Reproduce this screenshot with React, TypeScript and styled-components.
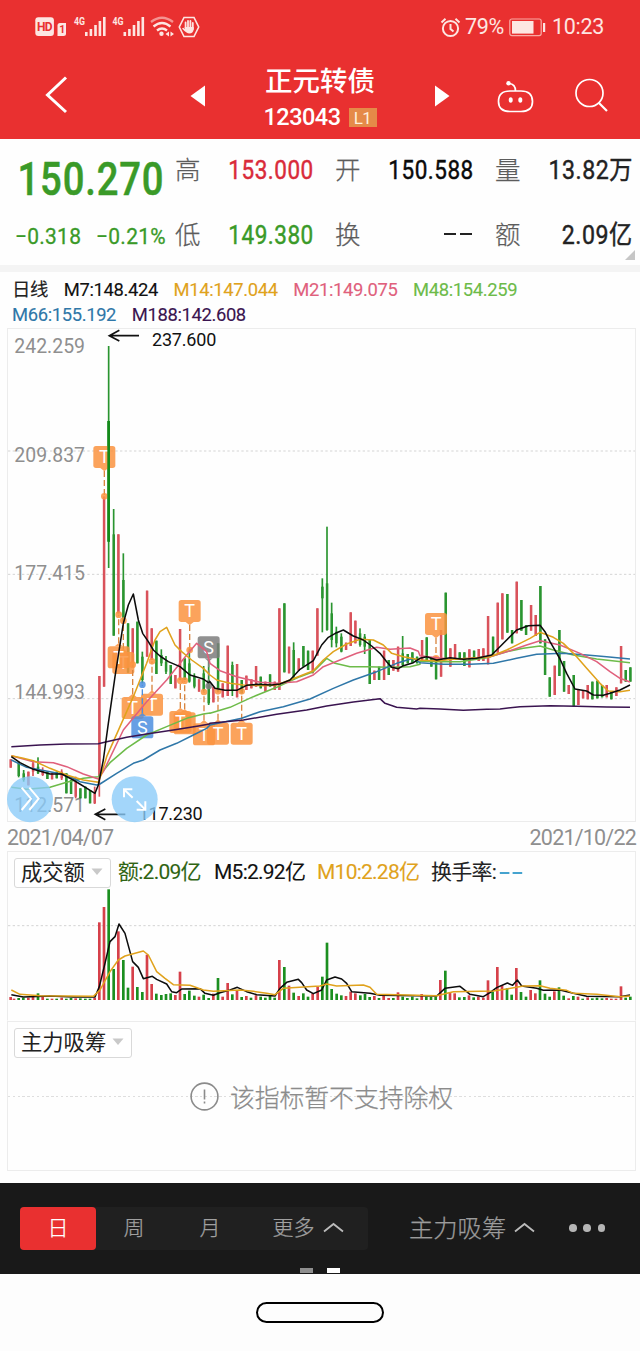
import React from "react";
import styled, { createGlobalStyle } from "styled-components";

const Global = createGlobalStyle`
  * { box-sizing: border-box; }
  body { margin: 0; background: #fff; }
  body, button { font-family: Roboto, "Noto Sans CJK SC", sans-serif; }
  svg { display: block; flex: none; overflow: visible; }
  svg text { font-family: Roboto, "Noto Sans CJK SC", sans-serif; }
`;

const RED = "#e93030";
const UP = "#d6404a";
const DOWN = "#1b8f20";

const Page = styled.main`
  width: 640px;
  height: 1351px;
  display: flex;
  flex-direction: column;
  overflow: hidden;
  background: #fefefe;
`;

/* ---------- top bars ---------- */

const StatusBar = styled.div`
  height: 54px;
  flex: none;
  background: ${RED};
  color: #fde6e2;
  display: flex;
  justify-content: space-between;
  align-items: center;
  padding: 0 36px 0 35px;
`;

const StatusRight = styled.div`
  display: flex;
  align-items: center;
  font-size: 21.5px;
  letter-spacing: -0.3px;
  line-height: 56px;
  gap: 5px;
`;

const Clock = styled.span`
  margin-left: 1px;
`;

const Header = styled.header`
  height: 85px;
  flex: none;
  background: ${RED};
  color: #fff;
  display: grid;
  grid-template-columns: 186px 268px 94px 92px;
`;

const HeaderCell = styled.div<{ $left: number; $top: number }>`
  padding: ${(p) => p.$top}px 0 0 ${(p) => p.$left}px;
`;

const TitleCell = styled.div`
  display: flex;
  justify-content: space-between;
  padding: 0 3px 0 3px;
`;

const Arrow = styled.div`
  padding-top: 31px;
`;

const TitleBlock = styled.div`
  display: flex;
  flex-direction: column;
  align-items: center;
`;

const Title = styled.h1`
  margin: 10px 0 0;
  font-size: 27.5px;
  font-weight: 500;
  line-height: 36px;
`;

const Code = styled.div`
  display: flex;
  align-items: center;
  gap: 8px;
  font-size: 23.5px;
  font-weight: 500;
  letter-spacing: -0.5px;
  line-height: 34px;
`;

const Level = styled.span`
  width: 28px;
  height: 19px;
  background: #e58a48;
  color: #fff0dc;
  font-size: 17px;
  font-weight: 400;
  line-height: 20px;
  text-align: center;
`;

/* ---------- quote ---------- */

const Quote = styled.section`
  height: 126px;
  flex: none;
  display: grid;
  grid-template-columns: 138px 138px 138px 137px;
  grid-template-rows: 64px 62px;
  column-gap: 22px;
  padding-left: 15px;
  position: relative;
`;

const Price = styled.div`
  padding-left: 3px;
  font-size: 45.5px;
  font-weight: 500;
  letter-spacing: 1px;
  line-height: 81px;
  color: #3a9a28;
  -webkit-text-stroke: 0.5px #3a9a28;
  white-space: nowrap;
  transform: scaleX(0.84);
  transform-origin: 0 50%;
`;

const Change = styled.div`
  display: flex;
  gap: 16px;
  font-size: 22.5px;
  letter-spacing: 0.3px;
  line-height: 66px;
  color: #3a9a28;
  white-space: nowrap;
  -webkit-text-stroke: 0.3px #3a9a28;
  transform: scaleX(0.93);
  transform-origin: 0 50%;
`;

const Cell = styled.div<{ $line: number }>`
  display: flex;
  justify-content: space-between;
  align-items: flex-start;
  line-height: ${(p) => p.$line}px;
  white-space: nowrap;
`;

const Label = styled.span`
  font-size: 25.5px;
  font-weight: 300;
  color: #5c5c5c;
  -webkit-text-stroke: 0.25px #5c5c5c;
`;

const Value = styled.span<{ $color: string; $scale: number }>`
  font-size: 26px;
  letter-spacing: 0.6px;
  margin-right: -0.6px;
  color: ${(p) => p.$color};
  -webkit-text-stroke: 0.45px ${(p) => p.$color};
  transform: scaleX(${(p) => p.$scale});
  transform-origin: 100% 50%;
`;

const DashSlot = styled.span`
  padding-top: 29px;
`;

const Corner = styled.i`
  position: absolute;
  right: 5px;
  bottom: 5px;
  border-left: 10px solid transparent;
  border-bottom: 10px solid #c6c6c6;
`;

const Divider = styled.div`
  height: 7px;
  flex: none;
  background: #f4f4f4;
`;

/* ---------- chart panels ---------- */

const Legend = styled.div`
  height: 56px;
  flex: none;
  padding: 6px 12px 0;
`;

const LegendRow = styled.div`
  display: flex;
  gap: 15.7px;
  height: 24.5px;
  line-height: 24.5px;
  align-items: center;
  white-space: nowrap;
`;

const LegendItem = styled.span<{ $color: string }>`
  font-size: 18.4px;
  letter-spacing: -0.36px;
  color: ${(p) => p.$color};
  -webkit-text-stroke: 0.12px ${(p) => p.$color};
`;

const Panel = styled.section<{ $height: number; $open?: boolean }>`
  height: ${(p) => p.$height}px;
  flex: none;
  margin: 0 4px 0 7px;
  border: 1px solid #ececec;
  border-bottom-color: ${(p) => (p.$open ? "transparent" : "#ececec")};
`;

const Dates = styled.div`
  height: 29px;
  flex: none;
  display: flex;
  justify-content: space-between;
  padding: 0 4px 0 7px;
  font-size: 21.5px;
  line-height: 31px;
  letter-spacing: -0.8px;
  color: #8f8f8f;
`;

const IndicatorBar = styled.div`
  height: 35px;
  display: flex;
  align-items: center;
  padding: 6px 0 0 6px;
  white-space: nowrap;
`;

const Select = styled.button<{ $width: number }>`
  width: ${(p) => p.$width}px;
  height: 30px;
  padding: 1.5px 0 0 6px;
  margin: 0 7px 0 0;
  flex: none;
  display: flex;
  align-items: center;
  gap: 6px;
  background: #fff;
  border: 1.5px solid #d9d9d9;
  border-radius: 3px;
  color: #222;
  font-size: 21.3px;
  line-height: 30px;
`;

const Metric = styled.span<{ $color: string; $width: number }>`
  width: ${(p) => p.$width}px;
  height: 30px;
  line-height: 31px;
  flex: none;
  display: flex;
  align-items: center;
  gap: 3px;
  font-size: 21px;
  letter-spacing: -0.75px;
  color: ${(p) => p.$color};
  -webkit-text-stroke: 0.1px ${(p) => p.$color};
`;

const Notice = styled.div`
  height: 74px;
  margin-top: 2px;
  display: flex;
  align-items: center;
  justify-content: center;
  gap: 11px;
  background: repeating-linear-gradient(90deg, #dedede 0 2.4px, transparent 2.4px 4.8px) 0 37px / 100% 1px no-repeat;
`;

const NoticeText = styled.span`
  padding-top: 6px;
  font-size: 24.8px;
  line-height: 68px;
  font-weight: 300;
  color: #8b8b8b;
  -webkit-text-stroke: 0.25px #8b8b8b;
`;

/* ---------- bottom bars ---------- */

const Toolbar = styled.nav`
  height: 91px;
  flex: none;
  margin-top: 12px;
  background: #191919;
  color: #9b9b9b;
  display: flex;
  flex-wrap: wrap;
  padding: 23.5px 0 0 20px;
`;

const Periods = styled.div`
  width: 348px;
  height: 43px;
  display: flex;
  background: #202020;
  border-radius: 4px;
`;

const Period = styled.button<{ $active?: boolean; $width: number }>`
  width: ${(p) => p.$width}px;
  height: 43px;
  padding: 0;
  border: 0;
  border-radius: 4px;
  display: flex;
  align-items: center;
  justify-content: center;
  gap: 8px;
  font-size: 21px;
  font-weight: 300;
  line-height: 45px;
  -webkit-text-stroke: 0.25px currentColor;
  background: ${(p) => (p.$active ? RED : "transparent")};
  color: ${(p) => (p.$active ? "#fff" : "#a0a0a0")};
`;

const Indicator = styled.div`
  height: 43px;
  margin-left: 41px;
  display: flex;
  align-items: center;
  gap: 8px;
  font-size: 24.3px;
  font-weight: 300;
  line-height: 45px;
  -webkit-text-stroke: 0.25px currentColor;
`;

const Dots = styled.div`
  height: 43px;
  margin-left: 34px;
  display: flex;
  align-items: center;
  gap: 6.6px;
  i {
    width: 7.6px;
    height: 7.6px;
    border-radius: 50%;
    background: #b5b5b5;
  }
`;

const Pager = styled.div`
  width: 620px;
  display: flex;
  gap: 14px;
  padding: 17px 0 0 280px;
`;

const PagerMark = styled.i<{ $on?: boolean }>`
  width: 13px;
  height: 5.5px;
  background: ${(p) => (p.$on ? "#fff" : "#8f8f8f")};
`;

const SystemBar = styled.div`
  flex: 1;
  display: flex;
  justify-content: center;
  padding-top: 28px;
  background: #fdfdfd;
`;

const HomePill = styled.div`
  width: 128px;
  height: 21px;
  border: 2px solid #000;
  border-radius: 11px;
`;

/* ---------- chart data, in thirds of a pixel ---------- */

type Bar = [string, number, number, number, number?, number?];

type Segment = { x: number; y: number; bars: Bar[] };

const candles: Segment[] = [
  {
    x: 0,
    y: 1740,
    bars: [
      ["r", 32, 538, 563], ["g", 56, 545, 592, 548, 588], ["g", 71, 570, 605, 580, 600], ["r", 85, 575, 616], ["r", 99, 542, 588, 550, 575],
      ["g", 114, 532, 582, 560, 580], ["r", 128, 562, 588, 570, 585], ["g", 142, 575, 597], ["r", 156, 578, 598], ["g", 170, 575, 595],
      ["r", 185, 568, 600, 575, 595], ["g", 199, 580, 640], ["g", 213, 600, 642], ["r", 227, 590, 655, 605, 650], ["g", 241, 625, 655],
      ["g", 256, 620, 655], ["g", 270, 630, 670], ["r", 284, 620, 672, 640, 670], ["r", 298, 288, 650, 288, 590], ["r", 312, -250, 320],
      ["g", 326, -702, -36, -477, -115], ["g", 341, -213, 167, -137, 167], ["r", 355, -137, 100], ["g", 370, -80, 125, 0, 125],
      ["g", 384, 130, 278], ["r", 398, 145, 250], ["g", 412, 125, 250], ["g", 427, 215, 310, 230, 300], ["r", 441, 32, 230], ["r", 455, 145, 240],
      ["g", 469, 182, 282], ["g", 484, 208, 258, 225, 250], ["g", 498, 228, 282, 245, 275], ["g", 512, 255, 312], ["r", 526, 285, 325],
      ["r", 540, 147, 300], ["g", 554, 235, 300], ["g", 568, 205, 308, 250, 305], ["g", 583, 280, 325, 290, 320], ["r", 597, 298, 335],
      ["g", 611, 258, 335, 280, 330], ["g", 626, 240, 375, 300, 370],
    ],
  },
  {
    x: 630,
    y: 1530,
    bars: [
      ["r", 10, 530, 577], ["g", 24, 400, 545], ["r", 38, 520, 562], ["r", 53, 407, 558], ["g", 67, 455, 558, 465, 540], ["r", 81, 462, 562],
      ["g", 95, 510, 550], ["r", 109, 497, 540], ["r", 124, 508, 535], ["r", 138, 468, 530], ["g", 152, 500, 535], ["r", 166, 515, 545],
      ["g", 180, 493, 530], ["r", 194, 515, 540], ["r", 208, 295, 540], ["g", 223, 280, 487], ["r", 237, 410, 490], ["g", 251, 397, 510, 420, 500],
      ["r", 266, 445, 482], ["g", 280, 408, 470], ["g", 294, 422, 480], ["r", 308, 422, 490], ["r", 322, 295, 437], ["g", 337, 205, 367, 230, 265],
      ["g", 351, 50, 362, 220, 360], ["g", 365, 278, 412, 310, 390], ["g", 379, 350, 412, 365, 400], ["g", 394, 370, 427, 380, 425],
      ["r", 408, 398, 420], ["r", 422, 307, 408], ["r", 436, 332, 400], ["g", 450, 355, 410, 370, 405], ["g", 464, 372, 432, 380, 410],
      ["g", 479, 390, 522], ["r", 493, 482, 510], ["g", 507, 470, 510], ["r", 522, 422, 510], ["g", 536, 450, 495], ["r", 550, 450, 482],
      ["r", 564, 410, 485], ["g", 578, 378, 470, 430, 465], ["g", 593, 432, 460], ["g", 607, 427, 458], ["g", 621, 440, 460],
      ["r", 636, 390, 455], ["g", 650, 382, 450],
    ],
  },
  {
    x: 1260,
    y: 1680,
    bars: [
      ["g", 34, 292, 320], ["g", 48, 298, 358], ["r", 63, 210, 350], ["g", 77, 98, 300], ["r", 91, 265, 320], ["r", 105, 252, 298],
      ["g", 119, 277, 300], ["g", 133, 277, 318], ["r", 148, 268, 322], ["g", 162, 272, 300], ["r", 176, 267, 303], ["r", 190, 265, 303],
      ["r", 204, 168, 313], ["g", 219, 230, 285], ["r", 233, 128, 278], ["r", 247, 100, 238], ["g", 262, 102, 218], ["g", 276, 210, 250],
      ["r", 290, 65, 220], ["g", 304, 120, 212], ["g", 318, 195, 225], ["r", 333, 135, 212], ["r", 347, 165, 228], ["g", 361, 78, 250],
      ["g", 375, 238, 345], ["g", 389, 352, 410], ["r", 404, 317, 405], ["g", 418, 210, 348], ["g", 432, 303, 395], ["r", 446, 375, 402],
      ["g", 461, 345, 440], ["r", 475, 390, 435], ["r", 489, 392, 415], ["r", 503, 375, 418], ["g", 517, 365, 418], ["g", 532, 362, 415],
      ["g", 546, 375, 412], ["r", 560, 375, 412], ["g", 574, 395, 418], ["r", 589, 382, 408], ["r", 603, 258, 370], ["g", 617, 330, 365],
      ["g", 631, 322, 365],
    ],
  },
];

type Line = { color: string; parts: [string, string, string] };

const averages: Line[] = [
  {
    color: "#6dbb49",
    parts: [
      "34,622 80,628 150,622 200,607 250,595 295,590 330,548 380,505 440,465 500,440 560,415 610,402 630,399",
      "0,610 60,592 130,560 200,532 270,500 310,485 350,445 375,460 420,470 470,470 540,472 600,470 630,463",
      "0,303 60,305 120,305 200,293 260,275 310,265 360,258 400,270 460,285 530,297 630,308",
    ],
  },
  {
    color: "#2f77a8",
    parts: [
      "34,540 80,562 150,575 200,585 240,605 290,615 300,612 350,580 400,550 430,540 480,510 530,490 580,465 620,445",
      "0,645 95,625 150,605 220,590 300,567 370,535 430,510 500,485 560,460 610,445",
      "0,308 70,313 150,313 220,310 290,295 350,283 430,280 500,285 560,290 630,297",
    ],
  },
  {
    color: "#e0607c",
    parts: [
      "34,527 100,545 160,548 200,560 250,582 295,597 310,575 370,450 440,365 500,300 560,225 590,190 620,215",
      "0,460 30,482 80,500 150,517 200,520 260,515 310,495 340,470 390,450 440,430 500,412 540,418 600,414 625,424",
      "0,287 50,293 100,298 150,295 210,290 270,272 320,255 360,242 420,255 480,280 530,305 570,335 600,355 630,366",
    ],
  },
  {
    color: "#e0a21c",
    parts: [
      "34,527 70,535 100,542 150,565 200,585 250,600 295,607 305,580 320,530 360,440 400,350 440,250 465,180 480,155 500,142 525,195 545,215 575,240 610,265",
      "0,495 20,510 60,520 100,525 160,527 200,525 240,510 310,482 340,450 370,425 410,402 450,388 490,390 520,405 545,430 580,440 620,448",
      "0,300 50,303 100,298 150,295 210,290 260,270 300,250 330,235 360,217 400,232 430,250 470,290 500,325 540,370 565,393 600,395 630,391",
    ],
  },
  {
    color: "#3a1450",
    parts: [
      "34,500 120,495 200,492 295,491 320,485 380,472 440,462 520,450 600,437 628,432",
      "0,640 100,630 200,613 290,600 350,588 430,576 510,566 525,580 560,592 620,597",
      "0,445 60,447 130,451 200,448 240,447 300,440 390,437 470,439 560,441 630,442",
    ],
  },
  {
    color: "#0c0c0c",
    parts: [
      "34,530 60,548 100,568 150,582 185,582 220,600 285,640 295,615 310,540 325,430 345,290 370,130 385,75 400,42 415,120 428,160 445,185 460,210 480,228 505,245 540,260 570,285 610,297 625,308",
      "0,515 15,535 45,541 80,541 110,526 140,523 185,525 210,522 240,510 270,478 310,452 335,405 355,382 380,368 400,360 430,378 460,390 485,408 510,430 530,455 545,472 565,476 580,467 610,458 625,448",
      "0,295 20,290 50,300 90,293 130,298 170,295 215,285 245,255 275,225 290,210 325,197 360,196 375,215 390,245 420,297 440,340 465,387 500,393 520,405 550,406 575,398 600,390 630,375",
    ],
  },
];

const offsets = [
  [0, 1740],
  [630, 1530],
  [1260, 1680],
];

const joinParts = (parts: string[]) =>
  parts
    .flatMap((part, i) =>
      part.split(" ").map((pair) => {
        const [x, y] = pair.split(",").map(Number);
        return `${x + offsets[i][0]},${y + offsets[i][1]}`;
      })
    )
    .join(" ");

type Mark = { x: number; y: number; kind: "T" | "S"; color: string; to: number };

const ORANGE = "#fb9440";

const marks: Mark[] = [
  { x: 313, y: 1371, kind: "T", color: ORANGE, to: 1489 },
  { x: 370, y: 1989, kind: "T", color: ORANGE, to: 1862 },
  { x: 356, y: 1972, kind: "T", color: ORANGE, to: 1844 },
  { x: 569, y: 1833, kind: "T", color: ORANGE, to: 1950 },
  { x: 626, y: 1942, kind: "S", color: "#7d7d7d", to: 2058 },
  { x: 398, y: 2124, kind: "T", color: ORANGE, to: 1994 },
  { x: 456, y: 2114, kind: "T", color: ORANGE, to: 1984 },
  { x: 427, y: 2182, kind: "S", color: "#4d8fe0", to: 2054 },
  { x: 554, y: 2170, kind: "T", color: ORANGE, to: 2042 },
  { x: 541, y: 2166, kind: "T", color: ORANGE, to: 2042 },
  { x: 612, y: 2203, kind: "T", color: ORANGE, to: 2076 },
  { x: 654, y: 2201, kind: "T", color: ORANGE, to: 2074 },
  { x: 725, y: 2201, kind: "T", color: ORANGE, to: 2074 },
  { x: 1308, y: 1872, kind: "T", color: ORANGE, to: 1975 },
];

const Marker = ({ x, y, kind, color, to }: Mark) => {
  const s = to > y ? 1 : -1;
  return (
    <g>
      <path d={`M${x} ${y + s * 42}V${to}`} stroke={kind === "T" ? "#d9853f" : color} strokeWidth={4} strokeDasharray="18 9" />
      <circle cx={x} cy={to} r={10} fill={color} opacity={0.85} />
      <g opacity={0.85} fill={color}>
        <rect x={x - 33} y={y - 33} width={66} height={66} rx={8} />
        <path d={`M${x - 12} ${y + s * 33}H${x + 12}L${x} ${y + s * 43}Z`} />
      </g>
      <text x={x} y={y + 19} fontSize={54} fontWeight={400} fill="#fff" textAnchor="middle">
        {kind}
      </text>
    </g>
  );
};

const axis: [string, number][] = [
  ["242.259", 1060],
  ["209.837", 1385],
  ["177.415", 1741],
  ["144.993", 2096],
  ["112.571", 2435],
];

const PriceChart = () => (
  <svg width="627" height="492" viewBox="24 987 1881 1476">
    {[1353, 1723, 2096].map((y) => (
      <path key={y} d={`M24 ${y}H1905`} stroke="#d4d4d4" strokeWidth={3} strokeDasharray="7 7" />
    ))}
    {axis.map(([label, y]) => (
      <text key={label} x={43} y={y} fontSize={62} fill="#8f8f8f" textLength={212} lengthAdjust="spacingAndGlyphs">
        {label}
      </text>
    ))}
    <g opacity={0.9}>
      {candles.map((seg) =>
        seg.bars.map(([c, x, top, bottom, bodyTop = top, bodyBottom = bottom]) => (
          <g key={seg.x + x} fill={c === "r" ? UP : "#148a1a"}>
            <rect x={seg.x + x - 2.5} y={seg.y + top} width={5} height={bottom - top} />
            <rect x={seg.x + x - 3.5} y={seg.y + bodyTop} width={7.5} height={bodyBottom - bodyTop} />
          </g>
        ))
      )}
    </g>
    {marks.map((m) => (
      <Marker key={`${m.x}-${m.y}`} {...m} />
    ))}
    <path d="M326 1263V1625" stroke="#148a1a" strokeWidth={8} />
    {averages.map((a) => (
      <polyline key={a.color} points={joinParts(a.parts)} fill="none" stroke={a.color} strokeWidth={4.6} strokeLinejoin="round" />
    ))}
    <g fill="none" stroke="#111" strokeWidth={5}>
      <path d="M417 1007H329M358 991L328 1007L358 1023" />
      <path d="M376 2443H287M316 2427L286 2443L316 2459" />
    </g>
    <g fontSize={54} fill="#111">
      <text x={456} y={1038} textLength={193}>237.600</text>
      <text x={416} y={2460} textLength={192}>117.230</text>
    </g>
    <g fill="#8accfa" opacity={0.78}>
      <circle cx={90} cy={2398} r={69} />
      <circle cx={404} cy={2398} r={69} />
    </g>
    <g fill="none" stroke="#fff" strokeWidth={6}>
      <path d="M65 2363L93 2396L65 2430M88 2363L116 2396L88 2430" />
      <path d="M372 2392V2368H397M373 2369L398 2393M436 2404V2429H410M435 2428L410 2403" />
    </g>
  </svg>
);

const volumes: [number, string][] = [
  [0, "r32:441 r42:446 g56:444 g70:443 r85:443 r99:438 g114:430 r128:440 g142:446 r156:446 g170:446 r185:443 g199:446 g213:444 r227:445 g241:445 g256:446 g270:446 r284:443 r298:217 r312:171 g326:118 g341:357 r355:244 g370:330 g384:413 r398:350 g412:411 g427:426 r441:314 r455:402 g469:431 g484:435 g498:432 g512:430 r526:435 r540:365 g554:432 g568:422 g583:437 r597:440 g611:434 g626:444 r640:431 g654:384 r668:440 r683:399 g697:433 r711:422 g725:441 r739:438 g753:443 r768:436 g782:440 g796:443 g810:436 g824:443 r838:330 g853:351 r867:407 g881:428 r896:438 g910:430 g924:440 r938:430 r953:410"],
  [960, "g7:380 g21:278 g35:417 g50:431 g64:436 r78:438 r92:425 r106:430 g121:436 g135:432 g149:441 r163:438 g177:444 r191:432 r206:444 g220:444 r234:427 g248:440 g262:444 g277:440 g291:445 r305:432 g319:440 g333:441 g347:440 r361:390 g376:362 r390:428 r404:430 g418:442 g433:441 r447:436 g461:442 r475:440 r490:443 r504:391 g518:425 r532:351 r546:405 g561:415 g575:434 r589:354 g603:426 g618:440 r632:420 r646:430 g660:391 g675:431 g689:440 r703:424 g717:412 g731:437 r746:445 g760:438 r774:440 g788:446 r803:442 g817:445 g831:443 g846:445 r860:444 r874:446 r888:446 r903:409 g917:443 g931:440"],
];

const VolumeChart = () => (
  <svg width="627" height="116" viewBox="24 111 1881 348">
    <path d="M24 227H1905" stroke="#d4d4d4" strokeWidth={3} strokeDasharray="7 7" />
    {volumes.map(([dx, list]) =>
      list.split(" ").map((item) => {
        const [x, top] = item.slice(1).split(":").map(Number);
        return <rect key={dx + x} x={dx + x - 4} y={top} width={8} height={450 - top} fill={item[0] === "r" ? UP : DOWN} />;
      })
    )}
    <g fill="none" strokeWidth={4.6} strokeLinejoin="round">
      <polyline
        stroke="#0c0c0c"
        points="34,434 70,441 150,438 220,441 285,441 298,410 315,340 330,275 345,260 357,222 375,250 398,335 415,352 430,386 457,379 470,388 500,402 515,425 530,428 545,417 600,416 615,430 640,436 660,428 690,420 712,412 740,425 770,434 825,438 840,415 860,397 895,388 905,398 920,420 940,431 965,420 980,390 1005,381 1025,387 1040,400 1055,425 1110,430 1140,436 1310,438 1335,415 1380,409 1400,425 1410,433 1450,440 1470,428 1490,413 1522,399 1538,406 1552,390 1565,408 1610,415 1630,421 1680,420 1720,430 1760,439 1860,440 1890,435"
      />
      <polyline
        stroke="#e0a21c"
        points="34,420 60,433 120,437 280,439 300,420 330,365 355,330 375,318 430,303 445,315 470,365 495,385 520,404 570,406 610,420 640,424 720,420 760,424 800,430 825,434 850,415 960,408 980,402 1010,408 1090,405 1110,412 1130,433 1310,437 1360,425 1480,423 1520,417 1570,408 1620,407 1650,415 1700,421 1720,430 1790,433 1860,440 1890,438"
      />
    </g>
  </svg>
);

/* ---------- icons ---------- */

const Signal = ({ x }: { x: number }) => (
  <g transform={`translate(${x} 0)`} fill="#fde6e2">
    <text x={0} y={9.3} fontSize={11.5} fontWeight={700} textLength={11} lengthAdjust="spacingAndGlyphs">4G</text>
    <rect x={11} y={16} width={2.6} height={4} />
    <rect x={15.6} y={13} width={2.6} height={7} />
    <rect x={20.2} y={9} width={2.6} height={11} />
    <rect x={24.6} y={5} width={2.6} height={15} />
    <rect x={29} y={1} width={2.6} height={19} />
  </g>
);

const StatusIcons = () => (
  <svg width="166" height="22" viewBox="0 0 166 22">
    <rect x={0.3} y={1.3} width={18.6} height={18.6} rx={3} fill="#fde6e2" />
    <text x={2} y={14.8} fontSize={12} fontWeight={700} fill={RED} textLength={15.5}>HD</text>
    <path d="M22.5 9.5Q22.5 7 25 7H31V17.5Q31 20 28.5 20H22.5Z" fill="#fde6e2" />
    <text x={24.3} y={17.4} fontSize={10.5} fontWeight={700} fill={RED}>1</text>
    <Signal x={39} />
    <Signal x={77.5} />
    <g fill="none" stroke="#fde6e2" strokeWidth={2.3}>
      <path d="M116 6Q127 -2.5 138 6" opacity={0.55} />
      <path d="M118.5 10.5Q127 3.5 135.5 10.5M122 14.5Q127 10.5 132 14.5" />
    </g>
    <circle cx={126.5} cy={17.7} r={2.2} fill="#fde6e2" />
    <path d="M130.5 18L134 15.5V20.5ZM139 18L135.5 15.5V20.5Z" fill="#fde6e2" />
    <path d="M149 1.5H159L163.7 11L159 20.5H149L144.3 11Z" fill="none" stroke="#fde6e2" strokeWidth={1.6} />
    <path d="M150.6 6.5V12M153 4.8V12M155.4 5V12M157.8 7V13" stroke="#fde6e2" strokeWidth={1.8} strokeLinecap="round" />
    <path d="M149.6 11H158.7V13.5Q158 17.5 154.5 17.5Q151.5 17.5 147 12.5L148.2 11.7L150 13Z" fill="#fde6e2" />
  </svg>
);

const AlarmIcon = () => (
  <svg width="20" height="21" viewBox="0 0 20 21" fill="none" stroke="#fde6e2" strokeWidth={2}>
    <circle cx={10.5} cy={11.5} r={7.6} />
    <path d="M10.5 7V12L13.5 14.5M1.5 5.5L5.5 1.8M19.5 5.5L15.5 1.8" />
  </svg>
);

const BatteryIcon = () => (
  <svg width="37" height="19" viewBox="0 0 37 19">
    <rect x={0.8} y={1} width={31.4} height={16.6} rx={2} fill="none" stroke="#f9aaa4" strokeWidth={1.2} />
    <rect x={3} y={3} width={21.5} height={12.6} fill="#fde6e2" />
    <rect x={34} y={5} width={2.2} height={9} fill="#fde6e2" />
  </svg>
);

const Caret = () => (
  <svg width="12" height="10" viewBox="0 0 12 10">
    <path d="M0.5 0.5H11.5L6 7Z" fill="#c9c9c9" />
  </svg>
);

const ChevronUp = () => (
  <svg width="21" height="12" viewBox="0 0 21 12" fill="none" stroke="#bcbcbc" strokeWidth={1.8}>
    <path d="M1 9.5L10.5 2L20 9.5" />
  </svg>
);

const DashPair = ({ color, width }: { color: string; width: number }) => (
  <svg width={width} height="4" viewBox="0 0 30 4" preserveAspectRatio="none">
    <path d="M1 2H13M17 2H29" stroke={color} strokeWidth={2.2} />
  </svg>
);

const quoteTop: [string, string, string][] = [
  ["高", "153.000", "#d92b3a"],
  ["开", "150.588", "#0a0a0a"],
  ["量", "13.82万", "#222"],
];

const quoteBottom: [string, string, string][] = [
  ["低", "149.380", "#3a9a28"],
  ["换", "", "#222"],
  ["额", "2.09亿", "#222"],
];

const QuoteCell = ({ label, value, color, line }: { label: string; value: string; color: string; line: number }) => (
  <Cell $line={line}>
    <Label>{label}</Label>
    {value ? (
      <Value $color={color} $scale={/\d$/.test(value) ? 0.865 : 0.89}>
        {value}
      </Value>
    ) : (
      <DashSlot>
        <DashPair color={color} width={30} />
      </DashSlot>
    )}
  </Cell>
);

export default function App() {
  return (
    <Page>
      <Global />
      <StatusBar>
        <StatusIcons />
        <StatusRight>
          <AlarmIcon />
          <span>79%</span>
          <BatteryIcon />
          <Clock>10:23</Clock>
        </StatusRight>
      </StatusBar>
      <Header>
        <HeaderCell $left={45} $top={21}>
          <svg width="24" height="40" viewBox="0 0 24 40" fill="none" stroke="#fff" strokeWidth={3}>
            <path d="M21 2.5L2.5 20L21 37" />
          </svg>
        </HeaderCell>
        <TitleCell>
          <Arrow>
            <svg width="16" height="22" viewBox="0 0 16 22">
              <path d="M16 0.5V21.5L1.5 11Z" fill="#fff" />
            </svg>
          </Arrow>
          <TitleBlock>
            <Title>正元转债</Title>
            <Code>
              123043<Level>L1</Level>
            </Code>
          </TitleBlock>
          <Arrow>
            <svg width="16" height="22" viewBox="0 0 16 22">
              <path d="M0 0.5V21.5L14.5 11Z" fill="#fff" />
            </svg>
          </Arrow>
        </TitleCell>
        <HeaderCell $left={43} $top={26}>
          <svg width="38" height="34" viewBox="0 0 38 34" fill="none" stroke="#fff" strokeWidth={1.7}>
            <path d="M12 3.5Q18.5 4 18.5 11M13 11H24Q35.5 11 35.5 21.5Q35.5 31.5 24 31.5H13Q1.5 31.5 1.5 21.5Q1.5 11 13 11Z" />
            <circle cx={11.5} cy={3.2} r={2.2} fill="#fff" stroke="none" />
            <ellipse cx={13.7} cy={20} rx={2} ry={2.8} fill="#fff" stroke="none" />
            <ellipse cx={23.3} cy={20} rx={2} ry={2.8} fill="#fff" stroke="none" />
          </svg>
        </HeaderCell>
        <HeaderCell $left={27} $top={24}>
          <svg width="34" height="34" viewBox="0 0 34 34" fill="none" stroke="#fff" strokeWidth={1.7}>
            <circle cx={14.5} cy={15} r={13.5} />
            <path d="M23.5 24.5L32 33" strokeWidth={2.2} />
          </svg>
        </HeaderCell>
      </Header>
      <Quote>
        <Price>150.270</Price>
        {quoteTop.map(([label, value, color]) => (
          <QuoteCell key={label} label={label} value={value} color={color} line={62} />
        ))}
        <Change>
          <span>−0.318</span>
          <span>−0.21%</span>
        </Change>
        {quoteBottom.map(([label, value, color]) => (
          <QuoteCell key={label} label={label} value={value} color={color} line={64} />
        ))}
        <Corner />
      </Quote>
      <Divider />
      <Legend>
        <LegendRow>
          <LegendItem $color="#222">日线</LegendItem>
          <LegendItem $color="#111">M7:148.424</LegendItem>
          <LegendItem $color="#e0a21c">M14:147.044</LegendItem>
          <LegendItem $color="#e0607c">M21:149.075</LegendItem>
          <LegendItem $color="#6dbb49">M48:154.259</LegendItem>
        </LegendRow>
        <LegendRow>
          <LegendItem $color="#2f77a8">M66:155.192</LegendItem>
          <LegendItem $color="#3a1450">M188:142.608</LegendItem>
        </LegendRow>
      </Legend>
      <Panel $height={494}>
        <PriceChart />
      </Panel>
      <Dates>
        <span>2021/04/07</span>
        <span>2021/10/22</span>
      </Dates>
      <Panel $height={170} $open>
        <IndicatorBar>
          <Select $width={97}>
            成交额
            <Caret />
          </Select>
          <Metric $color="#2f6412" $width={96}>额:2.09亿</Metric>
          <Metric $color="#111" $width={103}>M5:2.92亿</Metric>
          <Metric $color="#e0a21c" $width={114}>M10:2.28亿</Metric>
          <Metric $color="#222" $width={100}>
            换手率:
            <DashPair color="#45a3cf" width={24} />
          </Metric>
        </IndicatorBar>
        <VolumeChart />
      </Panel>
      <Panel $height={150}>
        <IndicatorBar>
          <Select $width={118}>
            主力吸筹
            <Caret />
          </Select>
        </IndicatorBar>
        <Notice>
          <svg width="29" height="29" viewBox="0 0 29 29" fill="none" stroke="#8b8b8b" strokeWidth={1.6}>
            <circle cx={14.5} cy={14.5} r={13.4} />
            <path d="M14.5 7.5V17.5M14.5 19.5V21.5" />
          </svg>
          <NoticeText>该指标暂不支持除权</NoticeText>
        </Notice>
      </Panel>
      <Toolbar>
        <Periods>
          <Period $active $width={76}>日</Period>
          <Period $width={76}>周</Period>
          <Period $width={76}>月</Period>
          <Period $width={120}>
            更多
            <ChevronUp />
          </Period>
        </Periods>
        <Indicator>
          主力吸筹
          <ChevronUp />
        </Indicator>
        <Dots>
          <i />
          <i />
          <i />
        </Dots>
        <Pager>
          <PagerMark />
          <PagerMark $on />
        </Pager>
      </Toolbar>
      <SystemBar>
        <HomePill />
      </SystemBar>
    </Page>
  );
}
